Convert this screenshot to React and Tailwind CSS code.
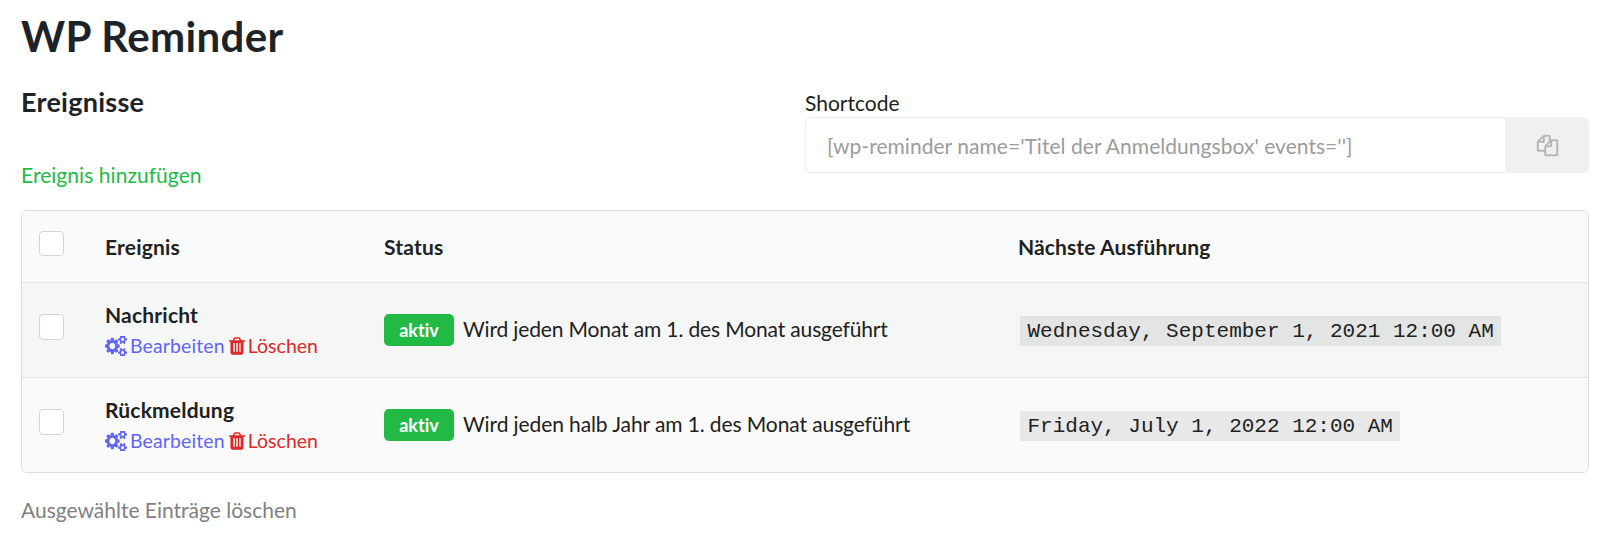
const GEARS =
  "M896 640q0-106-75-181t-181-75-181 75-75 181 75 181 181 75 181-75 75-181zm768 512q0-52-38-90t-90-38-90 38-38 90q0 53 37.5 90.5t90.5 37.5 90.5-37.5 37.5-90.5zm0-1024q0-52-38-90t-90-38-90 38-38 90q0 53 37.5 90.5t90.5 37.5 90.5-37.5 37.5-90.5zm-384 421v185q0 10-7 19.5t-16 10.5l-155 24q-11 35-32 76 34 48 90 115 7 10 7 20 0 12-7 19-23 30-82.5 89.5t-78.5 59.5q-11 0-21-7l-115-90q-37 19-77 31-11 108-23 155-7 24-30 24h-186q-11 0-20-7.5t-10-17.5l-23-153q-34-10-75-31l-118 89q-7 7-20 7-11 0-21-8-144-133-144-160 0-9 7-19 10-14 41-53t47-61q-23-44-35-82l-152-24q-10-1-17-9.5t-7-19.5v-185q0-10 7-19.5t16-10.5l155-24q11-35 32-76-34-48-90-115-7-11-7-20 0-12 7-20 22-30 82-89t79-59q11 0 21 7l115 90q34-18 77-32 11-108 23-154 7-24 30-24h186q11 0 20 7.5t10 17.5l23 153q34 10 75 31l118-89q8-7 20-7 11 0 21 8 144 133 144 160 0 9-7 19-12 16-42 54t-45 60q23 48 34 82l152 23q10 2 17 10.5t7 19.5zm640 533v140q0 16-149 31-12 27-30 52 51 113 51 138 0 4-4 7-122 71-124 71-8 0-46-47t-52-68q-20 2-30 2t-30-2q-14 21-52 68t-46 47q-2 0-124-71-4-3-4-7 0-25 51-138-18-25-30-52-149-15-149-31v-140q0-16 149-31 13-29 30-52-51-113-51-138 0-4 4-7 4-2 35-20t59-34 30-16q8 0 46 46.5t52 67.5q20-2 30-2t30 2q51-71 92-112l6-2q4 0 124 70 4 3 4 7 0 25-51 138 17 23 30 52 149 15 149 31zm0-1024v140q0 16-149 31-12 27-30 52 51 113 51 138 0 4-4 7-122 71-124 71-8 0-46-47t-52-68q-20 2-30 2t-30-2q-14 21-52 68t-46 47q-2 0-124-71-4-3-4-7 0-25 51-138-18-25-30-52-149-15-149-31v-140q0-16 149-31 13-29 30-52-51-113-51-138 0-4 4-7 4-2 35-20t59-34 30-16q8 0 46 46.5t52 67.5q20-2 30-2t30 2q51-71 92-112l6-2q4 0 124 70 4 3 4 7 0 25-51 138 17 23 30 52 149 15 149 31z";
const TRASH =
  "M512 1376v-704q0-14-9-23t-23-9h-64q-14 0-23 9t-9 23v704q0 14 9 23t23 9h64q14 0 23-9t9-23zm256 0v-704q0-14-9-23t-23-9h-64q-14 0-23 9t-9 23v704q0 14 9 23t23 9h64q14 0 23-9t9-23zm256 0v-704q0-14-9-23t-23-9h-64q-14 0-23 9t-9 23v704q0 14 9 23t23 9h64q14 0 23-9t9-23zm-544-992h448l-48-117q-7-9-17-11h-317q-10 2-17 11zm928 32v64q0 14-9 23t-23 9h-96v948q0 83-47 143.5t-113 60.5h-832q-66 0-113-58.5t-47-141.5v-952h-96q-14 0-23-9t-9-23v-64q0-14 9-23t23-9h309l70-167q15-37 54-63t79-26h320q40 0 79 26t54 63l70 167h309q14 0 23 9t9 23z";
const COPY =
  "M1696 384q40 0 68 28t28 68v1216q0 40-28 68t-68 28h-960q-40 0-68-28t-28-68v-288h-544q-40 0-68-28t-28-68v-672q0-40 20-88t48-76l408-408q28-28 76-48t88-20h416q40 0 68 28t28 68v328q68-40 128-40h416zm-544 213l-299 299h299v-299zm-640-384l-299 299h299v-299zm196 647l316-316v-416h-384v416q0 40-28 68t-68 28h-416v640h512v-256q0-40 20-88t48-76zm956 804v-1152h-384v416q0 40-28 68t-68 28h-416v640h896z";

const events = [
  {
    name: "Nachricht",
    text: "Wird jeden Monat am 1. des Monat ausgeführt",
    next: "Wednesday, September 1, 2021 12:00 AM",
    row: "bg-[#f5f7f6]",
    tracking: "tracking-[-0.145px]",
  },
  {
    name: "Rückmeldung",
    text: "Wird jeden halb Jahr am 1. des Monat ausgeführt",
    next: "Friday, July 1, 2022 12:00 AM",
    row: "bg-[#fafafa]",
    tracking: "tracking-[-0.1px]",
  },
];

const COLS = "grid grid-cols-[83px_279px_634px_1fr] border-[#e1e3e4]";

function Checkbox({ height = "h-[26px]" }) {
  return (
    <button
      type="button"
      role="checkbox"
      aria-checked="false"
      className={`block w-[25px] rounded-[4px] border border-[#d4d4d5] bg-white ${height}`}
    />
  );
}

function EventRow({ event, last }) {
  return (
    <div className={`${COLS} ${event.row} ${last ? "h-[94px]" : "h-[95px] border-b"}`}>
      <div className="pt-[31px] pl-[17px]">
        <Checkbox />
      </div>
      <div className="pt-[17px]">
        <div className="font-bold leading-[30px] tracking-[0.2px]">{event.name}</div>
        <div className="mt-px flex items-center text-[19.5px] leading-[30px]">
          <a className="flex items-center tracking-[0.12px] text-[#6366f1]">
            <svg viewBox="0 -128 1920 1536" preserveAspectRatio="none" className="mr-[3px] mb-px h-[20px] w-[22px]" fill="currentColor">
              <path d={GEARS} />
            </svg>
            Bearbeiten
          </a>
          <a className="ml-[4px] flex items-center text-[#db2828]">
            <svg viewBox="0 128 1408 1536" className="mr-[3px] mb-px h-[18px] w-[16px]" fill="currentColor">
              <path d={TRASH} />
            </svg>
            Löschen
          </a>
        </div>
      </div>
      <div className="flex items-center pb-px">
        <span className="mr-[9px] flex h-[32px] w-[70px] items-center justify-center rounded-[5px] bg-[#21ba45] text-[18px] font-bold text-white">
          aktiv
        </span>
        <span className={`pb-[2px] ${event.tracking}`}>{event.text}</span>
      </div>
      <div className="flex items-center pl-[2px]">
        <code className="mt-px h-[30px] bg-black/7 px-[7.5px] font-['Liberation_Mono',monospace] text-[21px] leading-[32px]">
          {event.next}
        </code>
      </div>
    </div>
  );
}

export default function App() {
  return (
    <main className="h-[551px] bg-white pt-[15px] pl-[21px] font-['Lato',sans-serif] text-[21px] leading-[30px] text-[#212121] [font-variant-ligatures:no-common-ligatures]">
      <h1 className="text-[42px] leading-[42px] font-bold tracking-[0.36px] text-[#1d2327]">WP Reminder</h1>
      <section className="flex h-[153px] pt-[30px]">
        <div className="w-[784px]">
          <h2 className="text-[27px] leading-[30px] font-bold tracking-[0.26px] text-[#1d2327]">Ereignisse</h2>
          <a className="mt-[43px] block tracking-[0.05px] text-[#21ba45]">Ereignis hinzufügen</a>
        </div>
        <div className="w-[784px] pt-px">
          <label className="block h-[29px]">Shortcode</label>
          <div className="flex h-[56px]">
            <div className="flex flex-1 items-center rounded-l-[6px] border border-r-0 border-[#eeeeef] pt-px pl-[21px] tracking-[0.04px] text-[#9c9c9c]">
              [wp-reminder name='Titel der Anmeldungsbox' events='']
            </div>
            <button
              type="button"
              className="flex w-[84px] items-center justify-center rounded-r-[6px] bg-[#f0f0f0] text-[#b4b4b5]"
            >
              <svg viewBox="0 0 1792 1792" className="h-[21px] w-[21px] overflow-visible" fill="currentColor" stroke="currentColor" strokeWidth="30">
                <path d={COPY} />
              </svg>
            </button>
          </div>
        </div>
      </section>
      <section className="w-[1568px] overflow-hidden rounded-[6px] border border-[#dcddde]">
        <div className={`${COLS} h-[72px] border-b bg-[#f9fafb] font-bold tracking-[0.2px]`}>
          <div className="pt-[20px] pl-[17px]">
            <Checkbox height="h-[25px]" />
          </div>
          <div className="flex items-center">Ereignis</div>
          <div className="flex items-center">Status</div>
          <div className="flex items-center tracking-[0.12px]">Nächste Ausführung</div>
        </div>
        <EventRow event={events[0]} />
        <EventRow event={events[1]} last />
      </section>
      <a className="mt-[22px] block text-[#808080]">Ausgewählte Einträge löschen</a>
    </main>
  );
}
